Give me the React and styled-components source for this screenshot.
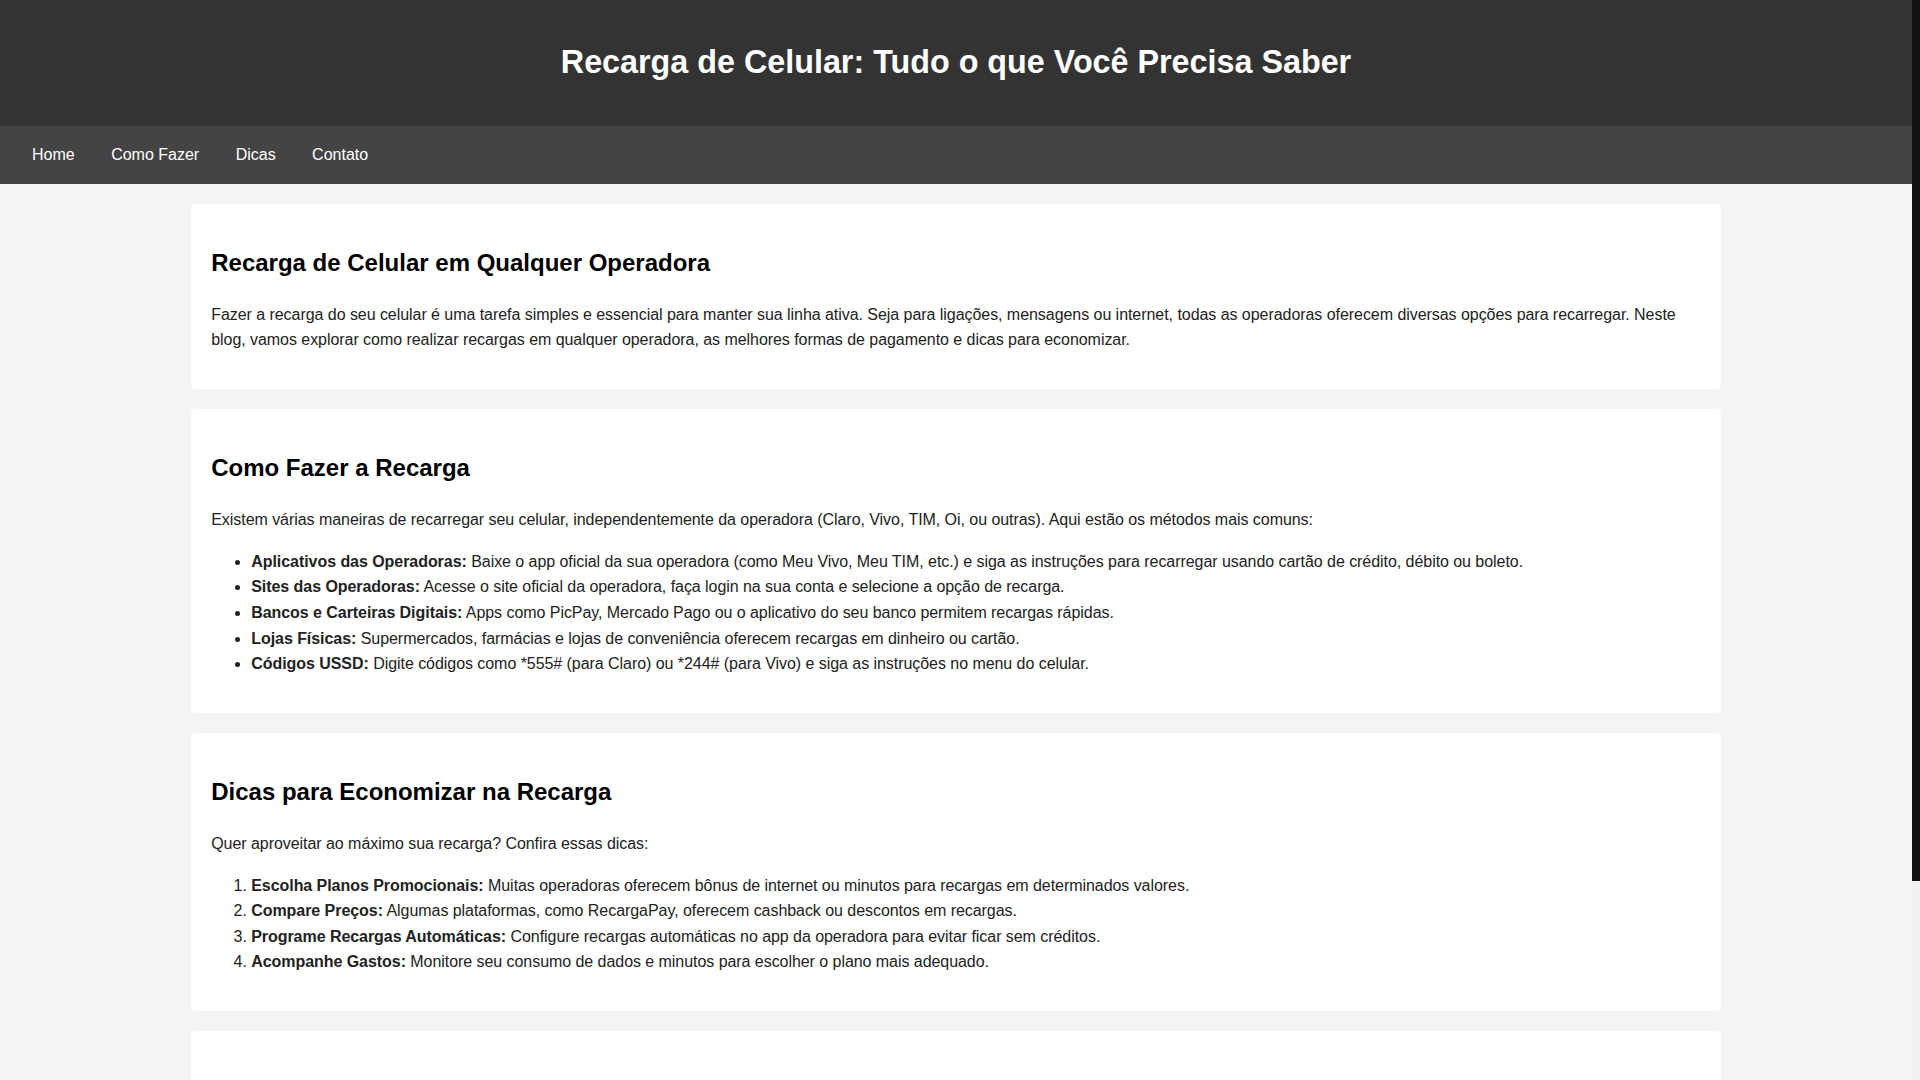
import React from "react";
import styled, { createGlobalStyle } from "styled-components";

const GlobalStyle = createGlobalStyle`
  html {
    overflow-y: scroll;
    scrollbar-width: none;
  }
  html::-webkit-scrollbar {
    display: none;
  }
  body {
    margin: 0 8px 0 0;
    padding: 0;
    font-family: "Liberation Sans", Arial, sans-serif;
    background: #f4f4f4;
    color: #222;
    line-height: 1.6;
  }
`;

const ScrollTrack = styled.div`
  position: fixed;
  top: 0;
  right: 0;
  bottom: 0;
  width: 8px;
  background: #f1f1f1;
  z-index: 10;
`;

const ScrollThumb = styled.div`
  width: 8px;
  height: 81.6%;
  background: #111;
`;

const Header = styled.header`
  background: #333;
  color: #fff;
  padding: 16px 0;
  text-align: center;
`;

const Title = styled.h1`
  font-size: 32.3px;
  line-height: 51.2px;
  font-weight: bold;
  margin: 21.44px 0;
`;

const Nav = styled.nav`
  background: #444;
  padding: 16px;
`;

const NavLink = styled.a`
  color: #fff;
  text-decoration: none;
  margin: 0 16px;
  font-size: 16px;
`;

const Main = styled.main`
  width: 80%;
  margin: 0 auto;
  display: flow-root;
`;

const Section = styled.section`
  background: #fff;
  padding: 20px;
  margin: 20px 0;
  border-radius: 5px;
`;

const H2 = styled.h2`
  font-size: 24px;
  margin: 19.92px 0;
  color: #000;
`;

const P = styled.p`
  margin: 16px 0;
  letter-spacing: -0.05px;
`;

const List = styled.ul`
  margin: 16px 0;
  padding-left: 40px;
  letter-spacing: -0.052px;
`;

const OList = styled.ol`
  margin: 16px 0;
  padding-left: 40px;
  letter-spacing: -0.052px;
`;

const Footer = styled.footer`
  background: #333;
  color: #fff;
  text-align: center;
  padding: 16px 0;
`;

const FooterText = styled.p`
  margin: 0;
`;

const methods = [
  ["Aplicativos das Operadoras:", "Baixe o app oficial da sua operadora (como Meu Vivo, Meu TIM, etc.) e siga as instruções para recarregar usando cartão de crédito, débito ou boleto."],
  ["Sites das Operadoras:", "Acesse o site oficial da operadora, faça login na sua conta e selecione a opção de recarga."],
  ["Bancos e Carteiras Digitais:", "Apps como PicPay, Mercado Pago ou o aplicativo do seu banco permitem recargas rápidas."],
  ["Lojas Físicas:", "Supermercados, farmácias e lojas de conveniência oferecem recargas em dinheiro ou cartão."],
  ["Códigos USSD:", "Digite códigos como *555# (para Claro) ou *244# (para Vivo) e siga as instruções no menu do celular."],
];

const tips = [
  ["Escolha Planos Promocionais:", "Muitas operadoras oferecem bônus de internet ou minutos para recargas em determinados valores."],
  ["Compare Preços:", "Algumas plataformas, como RecargaPay, oferecem cashback ou descontos em recargas."],
  ["Programe Recargas Automáticas:", "Configure recargas automáticas no app da operadora para evitar ficar sem créditos."],
  ["Acompanhe Gastos:", "Monitore seu consumo de dados e minutos para escolher o plano mais adequado."],
];

export default function App() {
  return (
    <>
      <GlobalStyle />
      <ScrollTrack>
        <ScrollThumb />
      </ScrollTrack>
      <Header>
        <Title>Recarga de Celular: Tudo o que Você Precisa Saber</Title>
      </Header>
      <Nav>
        <NavLink href="#home">Home</NavLink>{" "}
        <NavLink href="#como-fazer">Como Fazer</NavLink>{" "}
        <NavLink href="#dicas">Dicas</NavLink>{" "}
        <NavLink href="#contato">Contato</NavLink>
      </Nav>
      <Main>
        <Section id="home">
          <H2>Recarga de Celular em Qualquer Operadora</H2>
          <P>
            Fazer a recarga do seu celular é uma tarefa simples e essencial para manter sua linha ativa. Seja para ligações, mensagens ou internet, todas as operadoras oferecem diversas opções para recarregar. Neste blog, vamos explorar como realizar recargas em qualquer operadora, as melhores formas de pagamento e dicas para economizar.
          </P>
        </Section>
        <Section id="como-fazer">
          <H2>Como Fazer a Recarga</H2>
          <P>
            Existem várias maneiras de recarregar seu celular, independentemente da operadora (Claro, Vivo, TIM, Oi, ou outras). Aqui estão os métodos mais comuns:
          </P>
          <List>
            {methods.map(([b, t]) => (
              <li key={b}>
                <strong>{b}</strong> {t}
              </li>
            ))}
          </List>
        </Section>
        <Section id="dicas">
          <H2>Dicas para Economizar na Recarga</H2>
          <P>Quer aproveitar ao máximo sua recarga? Confira essas dicas:</P>
          <OList>
            {tips.map(([b, t]) => (
              <li key={b}>
                <strong>{b}</strong> {t}
              </li>
            ))}
          </OList>
        </Section>
        <Section id="contato">
          <H2>Contato</H2>
          <P>
            Tem dúvidas ou sugestões sobre recargas de celular? Entre em contato conosco pelo e-mail contato@recargacelular.com.br. Teremos prazer em ajudar!
          </P>
        </Section>
      </Main>
      <Footer>
        <FooterText>© 2024 Recarga de Celular. Todos os direitos reservados.</FooterText>
      </Footer>
    </>
  );
}
